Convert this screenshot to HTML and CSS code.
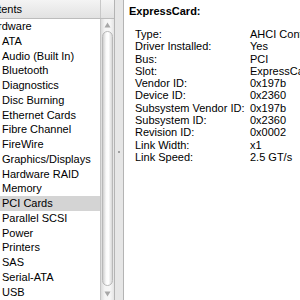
FILE: index.html
```html
<!DOCTYPE html>
<html>
<head>
<meta charset="utf-8">
<link rel="stylesheet" href="styles.css">
</head>
<body>
<div class="window">
  <div class="sidebar">
    <div class="list-header">
      <div class="hcol"><span class="htext">Contents</span></div>
      <div class="hcorner"></div>
    </div>
    <div class="list-body">
      <div class="list-clip">
        <ul class="list">
          <li class="group">Hardware</li>
          <li>ATA</li>
          <li>Audio (Built In)</li>
          <li>Bluetooth</li>
          <li>Diagnostics</li>
          <li>Disc Burning</li>
          <li>Ethernet Cards</li>
          <li>Fibre Channel</li>
          <li>FireWire</li>
          <li>Graphics/Displays</li>
          <li>Hardware RAID</li>
          <li>Memory</li>
          <li class="selected">PCI Cards</li>
          <li>Parallel SCSI</li>
          <li>Power</li>
          <li>Printers</li>
          <li>SAS</li>
          <li>Serial-ATA</li>
          <li>USB</li>
        </ul>
      </div>
      <div class="scrollbar">
        <div class="arrow up"><svg width="7" height="6" viewBox="0 0 7 6"><path d="M3.5 0.5 L6.5 5.5 L0.5 5.5 Z" fill="#a8a8a8"/></svg></div>
        <div class="thumb"></div>
        <div class="arrow down"><svg width="7" height="6" viewBox="0 0 7 6"><path d="M0.5 0.5 L6.5 0.5 L3.5 5.5 Z" fill="#a8a8a8"/></svg></div>
      </div>
    </div>
  </div>
  <div class="splitter"><span class="dimple"></span></div>
  <div class="detail">
    <div class="detail-title">ExpressCard:</div>
    <dl class="props">
      <dt>Type:</dt><dd>AHCI Controller</dd>
      <dt>Driver Installed:</dt><dd>Yes</dd>
      <dt>Bus:</dt><dd>PCI</dd>
      <dt>Slot:</dt><dd>ExpressCard</dd>
      <dt>Vendor ID:</dt><dd>0x197b</dd>
      <dt>Device ID:</dt><dd>0x2360</dd>
      <dt>Subsystem Vendor ID:</dt><dd>0x197b</dd>
      <dt>Subsystem ID:</dt><dd>0x2360</dd>
      <dt>Revision ID:</dt><dd>0x0002</dd>
      <dt>Link Width:</dt><dd>x1</dd>
      <dt>Link Speed:</dt><dd>2.5 GT/s</dd>
    </dl>
  </div>
</div>
</body>
</html>
```
FILE: styles.css
```css
html, body {
  margin: 0;
  padding: 0;
  background: #e8e8e8;
}
body {
  font-family: "Liberation Sans", Arial, sans-serif;
  color: #000;
  overflow: hidden;
}
.window {
  display: flex;
  width: 300px;
  height: 300px;
  overflow: hidden;
}
.sidebar {
  width: 114px;
  flex: none;
  display: flex;
  flex-direction: column;
  background: #fff;
  border-right: 1px solid #b4b4b4;
}
.list-header {
  height: 18px;
  flex: none;
  display: flex;
  background: linear-gradient(#f4f4f4, #e2e2e2);
  border-bottom: 1px solid #bcbcbc;
}
.hcol {
  width: 100px;
  overflow: hidden;
  border-right: 1px solid #c8c8c8;
  font-size: 11px;
  line-height: 18px;
  white-space: nowrap;
}
.htext {
  display: inline-block;
  margin-left: -22px;
}
.hcorner {
  flex: 1;
}
.list-body {
  flex: 1;
  display: flex;
  min-height: 0;
}
.list-clip {
  width: 100px;
  overflow: hidden;
  flex: none;
}
.list {
  list-style: none;
  margin: 0 0 0 -16px;
  padding: 0;
  font-size: 11px;
  white-space: nowrap;
}
.list li {
  height: 14.77px;
  line-height: 14.77px;
  padding-left: 18px;
}
.list li.group {
  padding-left: 0;
}
.list li.selected {
  background: #d4d4d4;
}
.scrollbar {
  width: 13px;
  flex: none;
  display: flex;
  flex-direction: column;
  align-items: center;
  background: linear-gradient(90deg, #dcdcdc, #f4f4f4 30%, #f6f6f6 70%, #e4e4e4);
  border-left: 1px solid #c4c4c4;
}
.arrow {
  height: 12px;
  display: flex;
  align-items: center;
  justify-content: center;
  flex: none;
}
.thumb {
  flex: 1;
  width: 11px;
  margin: 0 0 2px;
  border-radius: 6px;
  background: linear-gradient(90deg, #cfcfcf, #fafafa 35%, #ffffff 60%, #d6d6d6);
  border: 1px solid #b8b8b8;
  box-sizing: border-box;
}
.splitter {
  width: 8px;
  flex: none;
  background: #e6e6e6;
  display: flex;
  align-items: center;
  justify-content: center;
}
.dimple {
  width: 2px;
  height: 2px;
  border-radius: 1px;
  background: #8a8a8a;
  margin-top: 4px;
}
.detail {
  flex: 1;
  background: #fff;
  border-left: 1px solid #b4b4b4;
  padding: 4px 0 0 5px;
  font-size: 11px;
  white-space: nowrap;
  overflow: hidden;
}
.detail-title {
  font-weight: bold;
  line-height: 14px;
}
.props {
  display: grid;
  grid-template-columns: 115px auto;
  margin: 10px 0 0 6px;
  line-height: 12.3px;
}
.props dt, .props dd {
  margin: 0;
}
```
